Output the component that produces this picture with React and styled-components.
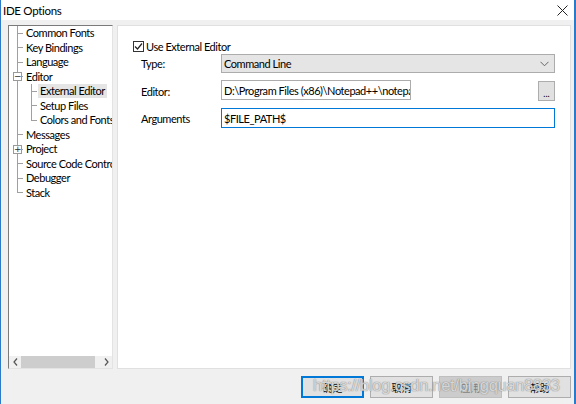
import React from "react";
import styled, { createGlobalStyle } from "styled-components";

const Global = createGlobalStyle`
  html, body { margin: 0; padding: 0; background: #f0f0f0; }
  * { box-sizing: border-box; }
  body {
    font-family: Lato, "Noto Sans CJK SC", sans-serif;
    font-size: 11px;
    letter-spacing: -0.45px;
    color: #000;
  }
`;

const Window = styled.div`
  position: relative;
  width: 576px;
  height: 404px;
  background: #f0f0f0;
  border-left: 1px solid #2b79c9;
  border-right: 2px solid #2b79c9;
  display: flex;
  flex-direction: column;
  overflow: hidden;
`;

const TitleBar = styled.div`
  height: 20px;
  background: #fff;
  display: flex;
  align-items: center;
  justify-content: space-between;
  padding: 0 6px 0 2px;
  font-size: 11.5px;
  letter-spacing: -0.3px;
`;

const Body = styled.div`
  flex: 1;
  display: flex;
  flex-direction: column;
  padding: 5px 3px 0 7px;
`;

const Main = styled.div`
  display: flex;
  gap: 4px;
  height: 344px;
`;

const TreePanel = styled.div`
  width: 105px;
  display: flex;
  flex-direction: column;
  background: #fff;
  border: 1px solid #a0a0a0;
  border-left-color: #7a7a7a;
  border-top-color: #7a7a7a;
  border-right-color: #e3e3e3;
  border-bottom-color: #e3e3e3;
`;

const TreeList = styled.div`
  flex: 1;
  overflow: hidden;
  white-space: nowrap;
`;

const Row = styled.div`
  display: flex;
  height: 14.5px;
  align-items: center;
`;

const lineColor = "#a0a0a0";

const Guide = styled.span`
  position: relative;
  flex: 0 0 14px;
  height: 100%;
  background-repeat: no-repeat;
  background-image: ${(p) =>
    p.$kind === "line"
      ? `linear-gradient(${lineColor}, ${lineColor})`
      : `linear-gradient(${lineColor}, ${lineColor}), linear-gradient(${lineColor}, ${lineColor})`};
  background-size: ${(p) =>
    p.$kind === "line"
      ? "1px 100%"
      : p.$kind === "corner"
      ? "1px 50%, 7px 1px"
      : "1px 100%, 7px 1px"};
  background-position: ${(p) =>
    p.$kind === "line" ? "8px 0" : "8px 0, 8px 50%"};
`;

const Expander = styled.span`
  position: absolute;
  left: 4px;
  top: 50%;
  margin-top: -4.5px;
  width: 9px;
  height: 9px;
  background: #fff;
  border: 1px solid #9a9a9a;
  font-size: 9px;
  letter-spacing: 0;
  line-height: 7px;
  text-align: center;
  color: #2b2b2b;
  font-family: "DejaVu Sans", sans-serif;
`;

const Label = styled.span`
  padding: 0 2px;
  margin-left: 1px;
  line-height: 14px;
  background: ${(p) => (p.$selected ? "#e5e5e5" : "transparent")};
`;

const HScroll = styled.div`
  height: 12px;
  display: flex;
  align-items: stretch;
  background: #f0f0f0;
`;

const ScrollArrow = styled.span`
  width: 12px;
  display: flex;
  align-items: center;
  justify-content: center;
`;

const ScrollTrack = styled.div`
  flex: 1;
  display: flex;
  align-items: stretch;
  padding: 0 1px 0 0;
`;

const ScrollThumb = styled.div`
  width: 74px;
  background: #cdcdcd;
`;

const RightPanel = styled.div`
  flex: 1;
  background: #fff;
  border: 1px solid #e0e0e0;
  padding: 14px 15px 0 15px;
  display: flex;
  flex-direction: column;
`;

const CheckRow = styled.label`
  display: flex;
  align-items: center;
  gap: 2px;
  height: 12px;
`;

const CheckBox = styled.span`
  width: 11px;
  height: 11px;
  border: 1px solid #333;
  display: flex;
  align-items: center;
  justify-content: center;
`;

const FormRow = styled.div`
  display: flex;
  align-items: center;
  height: ${(p) => p.$h}px;
  margin-top: ${(p) => p.$gap}px;
`;

const FieldLabel = styled.span`
  flex: 0 0 88px;
  padding-left: 8px;
  padding-top: ${(p) => p.$shift || 0}px;
`;

const Combo = styled.div`
  flex: 1;
  height: 100%;
  background: #e5e5e5;
  border: 1px solid #acacac;
  display: flex;
  align-items: center;
  justify-content: space-between;
  padding: 0 5px 0 2px;
`;

const FieldArea = styled.div`
  flex: 1;
  height: 100%;
  display: flex;
  justify-content: space-between;
  align-items: flex-start;
`;

const TextInput = styled.div`
  height: 100%;
  width: ${(p) => p.$width || "100%"};
  border: 1px solid ${(p) => (p.$focused ? "#0078d7" : "#acacac")};
  background: #fff;
  padding: 0 2px;
  display: flex;
  align-items: center;
  overflow: hidden;
  white-space: nowrap;
`;

const BrowseButton = styled.div`
  width: 17px;
  height: 20px;
  margin-top: 1px;
  background: #e1e1e1;
  border: 1px solid #adadad;
  display: flex;
  align-items: flex-end;
  justify-content: center;
  font-size: 9px;
  letter-spacing: 0;
  line-height: 13px;
`;

const ButtonBar = styled.div`
  display: flex;
  justify-content: flex-end;
  gap: 6px;
  margin-top: 7px;
`;

const Button = styled.div`
  width: 63px;
  height: 22px;
  display: flex;
  align-items: center;
  justify-content: center;
  font-size: 10px;
  letter-spacing: 0;
  background: ${(p) => (p.$disabled ? "#cccccc" : "#e1e1e1")};
  color: ${(p) => (p.$disabled ? "#838383" : "#000")};
  border: ${(p) =>
    p.$default ? "2px solid #0078d7" : p.$disabled ? "1px solid #bfbfbf" : "1px solid #adadad"};
`;

const Watermark = styled.div`
  position: absolute;
  left: 312px;
  top: 376px;
  font-family: "Liberation Sans", sans-serif;
  font-size: 16.5px;
  letter-spacing: -0.3px;
  color: rgba(255, 255, 255, 0.7);
  text-shadow: 0 0 1px rgba(110, 110, 110, 0.8), 0 0 1px rgba(110, 110, 110, 0.6);
  pointer-events: none;
  white-space: nowrap;
`;

const CloseIcon = () => (
  <svg width="11" height="11" viewBox="0 0 11 11">
    <path d="M0.5 0.5L10.5 10.5M10.5 0.5L0.5 10.5" stroke="#222" strokeWidth="1" />
  </svg>
);

const Chevron = () => (
  <svg width="9" height="6" viewBox="0 0 9 6">
    <path d="M0.5 0.8L4.5 4.8L8.5 0.8" fill="none" stroke="#666" strokeWidth="1" />
  </svg>
);

const Check = () => (
  <svg width="9" height="9" viewBox="0 0 9 9">
    <path d="M1 4.5L3.5 7L8 1.5" fill="none" stroke="#222" strokeWidth="1.2" />
  </svg>
);

const tree = [
  { label: "Common Fonts", guides: ["tee"] },
  { label: "Key Bindings", guides: ["tee"] },
  { label: "Language", guides: ["tee"] },
  { label: "Editor", guides: ["tee"], expander: "−" },
  { label: "External Editor", guides: ["line", "tee"], selected: true },
  { label: "Setup Files", guides: ["line", "tee"] },
  { label: "Colors and Fonts", guides: ["line", "corner"] },
  { label: "Messages", guides: ["tee"] },
  { label: "Project", guides: ["tee"], expander: "+" },
  { label: "Source Code Control", guides: ["tee"] },
  { label: "Debugger", guides: ["tee"] },
  { label: "Stack", guides: ["corner"] },
];

export default function App() {
  return (
    <>
      <Global />
      <Window>
        <TitleBar>
          <span>IDE Options</span>
          <CloseIcon />
        </TitleBar>
        <Body>
          <Main>
            <TreePanel>
              <TreeList>
                {tree.map((item) => (
                  <Row key={item.label}>
                    {item.guides.map((g, i) => (
                      <Guide key={i} $kind={g}>
                        {item.expander && i === 0 && <Expander>{item.expander}</Expander>}
                      </Guide>
                    ))}
                    <Label $selected={item.selected}>{item.label}</Label>
                  </Row>
                ))}
              </TreeList>
              <HScroll>
                <ScrollArrow>
                  <svg width="5" height="8" viewBox="0 0 5 8">
                    <path d="M4 0.5L1 4L4 7.5" fill="none" stroke="#555" strokeWidth="1.2" />
                  </svg>
                </ScrollArrow>
                <ScrollTrack>
                  <ScrollThumb />
                </ScrollTrack>
                <ScrollArrow>
                  <svg width="5" height="8" viewBox="0 0 5 8">
                    <path d="M1 0.5L4 4L1 7.5" fill="none" stroke="#555" strokeWidth="1.2" />
                  </svg>
                </ScrollArrow>
              </HScroll>
            </TreePanel>
            <RightPanel>
              <CheckRow>
                <CheckBox>
                  <Check />
                </CheckBox>
                <span>Use External Editor</span>
              </CheckRow>
              <FormRow $h={19} $gap={2}>
                <FieldLabel>Type:</FieldLabel>
                <Combo>
                  <span>Command Line</span>
                  <Chevron />
                </Combo>
              </FormRow>
              <FormRow $h={20} $gap={7}>
                <FieldLabel $shift={2}>Editor:</FieldLabel>
                <FieldArea>
                  <TextInput $width="190px">D:\Program Files (x86)\Notepad++\notepad++.exe</TextInput>
                  <BrowseButton>...</BrowseButton>
                </FieldArea>
              </FormRow>
              <FormRow $h={20} $gap={8}>
                <FieldLabel>Arguments</FieldLabel>
                <TextInput $focused>$FILE_PATH$</TextInput>
              </FormRow>
            </RightPanel>
          </Main>
          <ButtonBar>
            <Button $default>确定</Button>
            <Button>取消</Button>
            <Button $disabled>应用</Button>
            <Button>帮助</Button>
          </ButtonBar>
        </Body>
        <Watermark>https://blog.csdn.net/bingquan8833</Watermark>
      </Window>
    </>
  );
}
